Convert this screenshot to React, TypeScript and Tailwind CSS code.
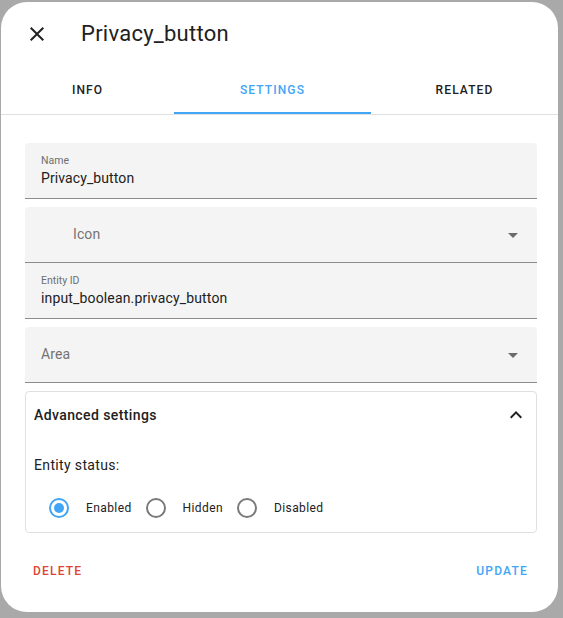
import React from "react";

const CloseIcon = () => (
  <svg width="24" height="24" viewBox="0 0 24 24" fill="#212121">
    <path d="M19,6.41L17.59,5L12,10.59L6.41,5L5,6.41L10.59,12L5,17.59L6.41,19L12,13.41L17.59,19L19,17.59L13.41,12L19,6.41Z" />
  </svg>
);

const MenuDown = () => (
  <svg width="24" height="24" viewBox="0 0 24 24" fill="#6b6b6b">
    <path d="M7,10L12,15L17,10H7Z" />
  </svg>
);

const ChevronUp = () => (
  <svg width="24" height="24" viewBox="0 0 24 24" fill="#212121">
    <path d="M7.41,15.41L12,10.83L16.59,15.41L18,14L12,8L6,14L7.41,15.41Z" />
  </svg>
);

const Radio = ({ checked, label }: { checked?: boolean; label: string }) => (
  <div className="flex items-center">
    <div className="w-[40px] h-[40px] flex items-center justify-center">
      <div
        className={
          checked
            ? "w-[20px] h-[20px] rounded-full border-2 border-[#42a5f5] flex items-center justify-center"
            : "w-[20px] h-[20px] rounded-full border-2 border-[#7a7a7a]"
        }
      >
        {checked ? <div className="w-[10px] h-[10px] rounded-full bg-[#42a5f5]" /> : null}
      </div>
    </div>
    <span className="pl-[7px] pr-[4px] text-[12px] leading-[16px] tracking-[0.4px] text-[#212121]">{label}</span>
  </div>
);

export default function App() {
  return (
    <div
      className="w-[563px] h-[618px] bg-[#a9a9a9] pt-[2px] pl-[1px]"
      style={{ fontFamily: "Roboto, 'Liberation Sans', sans-serif" }}
    >
      <div className="w-[557px] h-[610px] bg-white rounded-[26px] overflow-hidden flex flex-col">
        {/* Header */}
        <div className="h-[64px] flex items-center pl-[24px]">
          <CloseIcon />
          <div className="ml-[32px] text-[22px] leading-[28px] tracking-[0.25px] text-[#212121]">Privacy_button</div>
        </div>
        {/* Tabs */}
        <div className="flex h-[48px] border-b border-[#e0e0e0] box-content">
          <div className="w-[173px] flex items-center justify-center text-[12px] font-medium tracking-[1.1px] text-[#212121]">
            INFO
          </div>
          <div className="w-[197px] flex items-center justify-center text-[12px] font-medium tracking-[1.1px] text-[#42a5f5] border-b-2 border-[#42a5f5] pt-[2px]">
            SETTINGS
          </div>
          <div className="flex-1 flex items-center justify-center text-[12px] font-medium tracking-[1.1px] text-[#212121]">
            RELATED
          </div>
        </div>
        {/* Content */}
        <div className="pt-[28px] pl-[24px] pr-[21px] flex flex-col">
          <div className="h-[56px] bg-[#f4f4f4] rounded-t-[4px] border-b border-[#8c8c8c] pl-[16px] pt-[11px]">
            <div className="text-[10.5px] leading-[14px] text-[#6f6f6f]">Name</div>
            <div className="text-[14px] leading-[20px] tracking-[0.1px] text-[#212121]">Privacy_button</div>
          </div>
          <div className="mt-[8px] h-[56px] bg-[#f4f4f4] rounded-t-[4px] border-b border-[#8c8c8c] pl-[48px] pr-[12px] flex items-center justify-between">
            <div className="text-[14px] leading-[20px] tracking-[0.1px] text-[#737373] -mt-[1px]">Icon</div>
            <MenuDown />
          </div>
          <div className="h-[56px] bg-[#f4f4f4] border-b border-[#8c8c8c] pl-[16px] pt-[11px]">
            <div className="text-[10.5px] leading-[14px] text-[#6f6f6f]">Entity ID</div>
            <div className="text-[14px] leading-[20px] tracking-[0.15px] text-[#212121]">input_boolean.privacy_button</div>
          </div>
          <div className="mt-[8px] h-[56px] bg-[#f4f4f4] rounded-t-[4px] border-b border-[#8c8c8c] pl-[16px] pr-[12px] flex items-center justify-between">
            <div className="text-[14px] leading-[20px] tracking-[0.1px] text-[#737373] -mt-[1px]">Area</div>
            <MenuDown />
          </div>
          {/* Advanced settings */}
          <div className="mt-[8px] h-[142px] border border-[#e0e0e0] rounded-[4px] px-[8px] pb-[3px] flex flex-col">
            <div className="h-[46px] flex items-center justify-between">
              <div className="text-[14px] leading-[20px] font-medium tracking-[0.4px] text-[#212121]">Advanced settings</div>
              <ChevronUp />
            </div>
            <div className="mt-[17px] text-[14px] leading-[20px] tracking-[0.35px] text-[#212121]">Entity status:</div>
            <div className="mt-[13px] ml-[5px] flex items-center">
              <Radio checked label="Enabled" />
              <Radio label="Hidden" />
              <Radio label="Disabled" />
            </div>
          </div>
          {/* Footer */}
          <div className="mt-[20px] h-[36px] flex items-center justify-between pl-[8px] pr-[9px]">
            <div className="text-[12px] font-medium tracking-[1.2px] text-[#db4437]">DELETE</div>
            <div className="text-[12px] font-medium tracking-[1.2px] text-[#42a5f5]">UPDATE</div>
          </div>
        </div>
      </div>
    </div>
  );
}
